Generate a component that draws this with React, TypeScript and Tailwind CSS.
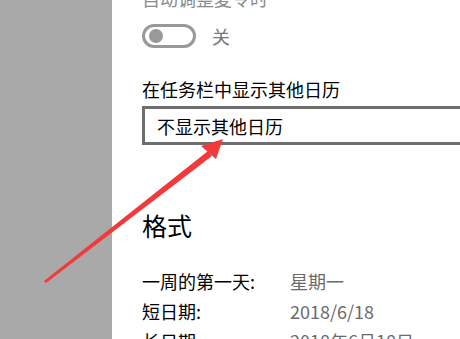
export default function App() {
  return (
    <div
      className="relative flex h-[339px] w-[460px] overflow-hidden bg-white"
      style={{ fontFamily: '"Noto Sans CJK SC", "Noto Sans", sans-serif' }}
    >
      {/* left gray panel */}
      <div className="w-[112px] shrink-0 bg-[#a9a9a9]" />

      {/* settings panel */}
      <div className="flex flex-1 flex-col pl-[30px] -mt-[14px] [&>*]:shrink-0">
        <div className="text-[18px] leading-[24px] text-[#8a8a8a]">自动调整夏令时</div>

        <div className="mt-[14px] flex items-center gap-[16px]">
          <div className="flex h-[24px] w-[54px] items-center rounded-full border-[3px] border-[#999999] pl-[4px]">
            <div className="h-[14px] w-[14px] rounded-full bg-[#999999]" />
          </div>
          <span className="text-[18px] leading-[24px] text-[#777777]">关</span>
        </div>

        <div className="mt-[28px] text-[18px] leading-[26px] text-black">在任务栏中显示其他日历</div>

        <div className="mt-[4px] flex h-[39px] w-[340px] items-center border-[3px] border-[#6e6e6e] pl-[12px]">
          <span className="text-[18px] leading-[24px] text-black">不显示其他日历</span>
        </div>

        <div className="mt-[64px] text-[25px] leading-[32px] text-black">格式</div>

        <div className="mt-[28px] flex flex-col gap-[6px] text-[18px] leading-[24px]">
          <div className="flex">
            <span className="w-[148px] text-black">一周的第一天:</span>
            <span className="text-[#6b6b6b]">星期一</span>
          </div>
          <div className="flex">
            <span className="w-[148px] text-black">短日期:</span>
            <span className="text-[#6b6b6b]">2018/6/18</span>
          </div>
          <div className="flex">
            <span className="w-[148px] text-black">长日期:</span>
            <span className="text-[#6b6b6b]">2018年6月18日</span>
          </div>
        </div>
      </div>

      {/* red annotation arrow */}
      <svg className="pointer-events-none absolute left-0 top-0" width="460" height="339">
        <polygon points="44,281 208,151 212,156 46,283" fill="#f23a3c" />
        <polygon points="223,139 201,146 216,159" fill="#f23a3c" />
      </svg>
    </div>
  );
}
